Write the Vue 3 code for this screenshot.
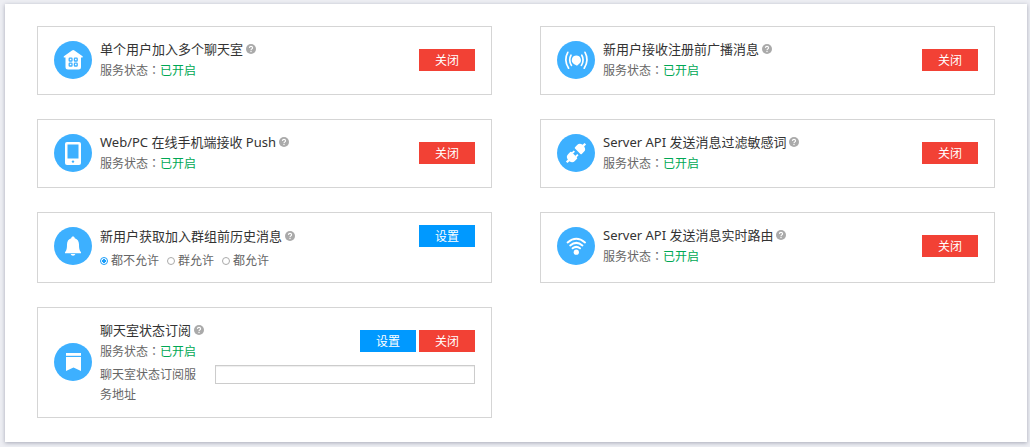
<script setup>
import { ref } from 'vue'

const cards = [
  { id: 'rooms', icon: 'house', title: '单个用户加入多个聊天室', actions: ['关闭'] },
  { id: 'broadcast', icon: 'broadcast', title: '新用户接收注册前广播消息', actions: ['关闭'] },
  { id: 'push', icon: 'phone', title: 'Web/PC 在线手机端接收 Push', actions: ['关闭'] },
  { id: 'filter', icon: 'plug', title: 'Server API 发送消息过滤敏感词', actions: ['关闭'] },
  { id: 'history', icon: 'bell', title: '新用户获取加入群组前历史消息', actions: ['设置'], options: ['都不允许', '群允许', '都允许'] },
  { id: 'route', icon: 'wifi', title: 'Server API 发送消息实时路由', actions: ['关闭'] },
  { id: 'subscribe', icon: 'bookmark', title: '聊天室状态订阅', actions: ['设置', '关闭'], address: '聊天室状态订阅服务地址' },
]

const history = ref('都不允许')
const address = ref('')
</script>

<template>
  <main class="panel">
    <section v-for="card in cards" :key="card.id" class="card" :class="{ roomy: card.options }">
      <svg class="icon" viewBox="0 0 38 38" aria-hidden="true">
        <circle cx="19" cy="19" r="19" fill="#3db0ff" />
        <g v-if="card.icon === 'house'">
          <path d="M18 9.400Q19.200 8.600 20.400 9.400L28.600 15.200Q29.400 16.400 28 16.600H27V26Q27 28.500 24.500 28.500H14Q11.500 28.500 11.500 26V16.600H10.400Q9 16.400 9.900 15.200Z" fill="#fff" />
          <g fill="#fff" stroke="#3db0ff" stroke-width="1.300">
            <rect x="15.200" y="17.200" width="2.800" height="2.800" rx=".6" />
            <rect x="20.400" y="17.200" width="2.800" height="2.800" rx=".6" />
            <rect x="15.200" y="22.200" width="2.800" height="2.800" rx=".6" />
            <rect x="20.400" y="22.200" width="2.800" height="2.800" rx=".6" />
          </g>
        </g>
        <g v-else-if="card.icon === 'broadcast'" fill="none" stroke="#fff" stroke-linecap="round">
          <path d="M19.400 14.600a4.600 4.600 0 0 1 2.800 8.200L20 24.800 16.800 23a4.600 4.600 0 0 1 2.600-8.400Z" fill="#fff" stroke="none" />
          <path d="M14 14.200Q11.200 19 14.400 24.400M24.800 14.200Q27.600 19 24.400 24.400" stroke-width="1.700" />
          <path d="M10.800 11.300Q6.400 19 11.600 27.200M28 11.300Q32.400 19 27.200 27.200" stroke-width="1.700" />
        </g>
        <g v-else-if="card.icon === 'phone'">
          <rect x="11" y="8" width="16" height="23" rx="2" fill="#fff" />
          <rect x="13.500" y="10.500" width="11" height="14" fill="#3db0ff" />
          <circle cx="19" cy="27.600" r="1.200" fill="#3db0ff" />
        </g>
        <g v-else-if="card.icon === 'plug'" transform="rotate(45 19 19)" fill="#fff">
          <path d="M14.200 15.600V12.600Q14.200 9.200 17.900 8.600V5.800H20.100V8.600Q23.800 9.200 23.800 12.600V15.600Q23.800 16.600 22.800 16.600H15.200Q14.200 16.600 14.200 15.600Z" />
          <path d="M14.200 22.400V25.400Q14.200 28.800 17.900 29.400V32.200H20.100V29.400Q23.800 28.800 23.800 25.400V22.400Q23.800 21.400 22.800 21.400H15.200Q14.200 21.400 14.200 22.400Z" />
          <path d="M15.600 18.800h1.800v3h-1.800zM20.600 18.800h1.800v3h-1.800z" />
        </g>
        <g v-else-if="card.icon === 'bell'" fill="#fff">
          <path d="M19 9.600C20 9.600 20.600 10.300 20.800 11.200 23.700 12 25 14.500 25 17.500 25 21.500 25.300 23.200 27 25.200V26.200H11V25.200C12.700 23.200 13 21.500 13 17.500 13 14.500 14.300 12 17.200 11.200 17.400 10.300 18 9.600 19 9.600Z" />
          <path d="M16.600 27H21.400Q20.800 28.800 19 28.800T16.600 27Z" />
        </g>
        <g v-else-if="card.icon === 'wifi'" fill="none" stroke="#fff" stroke-width="2" stroke-linecap="round">
          <circle cx="19.300" cy="25.200" r="2.600" fill="#fff" stroke="none" />
          <path d="M10.600 15.400Q19.300 8.200 28 15.400M13.200 18.400Q19.300 13.400 25.400 18.400M15.600 21.300Q19.300 18.400 23 21.300" />
        </g>
        <g v-else fill="#fff">
          <path d="M12 10h15v2.800H12z" />
          <path d="M12 14h15v14L19.500 24.600 12 28Z" />
        </g>
      </svg>

      <div class="body">
        <div class="head">
          <div class="text">
            <h2 class="title">
              <span>{{ card.title }}</span>
              <svg class="help" viewBox="0 0 10 10" role="img" aria-label="帮助">
                <circle cx="5" cy="5" r="5" fill="#aaa" />
                <path d="M3.400 3.900Q3.500 2.400 5 2.400T6.600 3.800Q6.600 4.600 5.700 5.100 5 5.500 5 6.200" fill="none" stroke="#fff" stroke-width="1.100" />
                <rect x="4.400" y="7" width="1.200" height="1.100" fill="#fff" />
              </svg>
            </h2>
            <div v-if="card.options" class="options" role="radiogroup" :aria-label="card.title">
              <label v-for="option in card.options" :key="option" class="option">
                <input v-model="history" type="radio" name="history" :value="option" />
                <span>{{ option }}</span>
              </label>
            </div>
            <p v-else class="status">服务状态<span class="colon">：</span><span class="on">已开启</span></p>
          </div>
          <div class="actions">
            <button v-for="action in card.actions" :key="action" type="button" :class="action === '设置' ? 'set' : 'close'">{{ action }}</button>
          </div>
        </div>
        <div v-if="card.address" class="address">
          <label for="address">{{ card.address }}</label>
          <input id="address" v-model="address" type="text" />
        </div>
      </div>
    </section>
  </main>
</template>

<style>
body {
  background: #edeef3;
}
</style>

<style scoped>
.panel {
  display: grid;
  grid-template-columns: repeat(2, minmax(0, 1fr));
  gap: 24px 48px;
  margin: 4px 3px 5px 5px;
  padding: 22px 32px 24px;
  background: #fff;
  box-shadow: 0 1px 4px rgba(60, 65, 90, 0.4);
  font: 12px/22px "Noto Sans", "Noto Sans CJK SC", sans-serif;
  color: #666;
}
.card {
  display: grid;
  grid-template-columns: 38px minmax(0, 1fr);
  align-content: start;
  align-items: center;
  gap: 8px;
  padding: 11px 16px 12px;
  border: 1px solid #d5d5d5;
}
.card.roomy {
  align-items: start;
  padding: 12px 16px 9px;
}
.icon {
  display: block;
  width: 38px;
  height: 38px;
}
.roomy .icon {
  margin-top: 2px;
}
.head {
  display: flex;
  justify-content: space-between;
  align-items: center;
}
.roomy .head {
  align-items: flex-start;
}
.title {
  display: flex;
  align-items: center;
  gap: 3px;
  margin: 0;
  font-size: 13px;
  font-weight: 400;
  line-height: 22px;
  color: #333;
}
.help {
  width: 10px;
  height: 10px;
}
.status {
  margin: 0;
}
.colon {
  font-family: "Noto Sans CJK TC", sans-serif;
  line-height: 1;
}
.on {
  color: #00a854;
}
.options {
  display: flex;
  gap: 8px;
  padding-top: 2px;
  line-height: 24px;
}
.option {
  display: flex;
  align-items: center;
  gap: 3px;
}
.option input {
  appearance: none;
  box-sizing: border-box;
  width: 8px;
  height: 8px;
  margin: 0;
  border: 1px solid #aaa;
  border-radius: 50%;
  background: #fff;
}
.option input:checked {
  border-color: #1a9dfa;
  background: radial-gradient(circle, #1a9dfa 2px, #fff 2px);
}
.actions {
  display: flex;
  gap: 3px;
}
button {
  width: 56px;
  height: 22px;
  padding: 2px 0 0;
  border: 0;
  font: inherit;
  line-height: 20px;
  color: #fff;
}
.set {
  background: #0099ff;
}
.close {
  background: #f24135;
}
.address {
  display: flex;
  align-items: flex-start;
  gap: 15px;
  margin-top: 2px;
  line-height: 20px;
}
.address label {
  width: 100px;
}
.address input {
  box-sizing: border-box;
  flex: 1;
  min-width: 0;
  height: 19px;
  padding: 0 4px;
  border: 1px solid #ccc;
  box-shadow: inset 0 1px 1px #eee;
  font: inherit;
}
</style>
